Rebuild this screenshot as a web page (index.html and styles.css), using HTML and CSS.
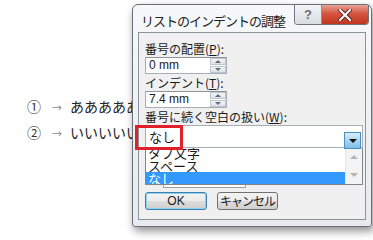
FILE: index.html
```html
<!DOCTYPE html>
<html lang="ja">
  <head>
    <meta charset="UTF-8" />
    <title>リストのインデントの調整</title>
    <link rel="stylesheet" href="styles.css">
  </head>
  <body>
    <div class="doc">
      <p class="doc-line"><span class="num">①</span><span class="arrow">→</span>あああああ</p>
      <p class="doc-line"><span class="num">②</span><span class="arrow">→</span>いいいいい</p>
    </div>

    <div class="dialog">
      <div class="title-bar">
        <span class="title">リストのインデントの調整</span>
        <div class="caption-buttons">
          <span class="cap-btn help">?</span>
          <span class="cap-btn close">
            <svg width="14" height="12" viewBox="0 0 14 12">
              <path d="M2 1 L12 11 M12 1 L2 11" stroke="#5a2a24" stroke-width="4" stroke-linecap="square" />
              <path d="M2 1 L12 11 M12 1 L2 11" stroke="#fff" stroke-width="2" stroke-linecap="square" />
            </svg>
          </span>
        </div>
      </div>

      <div class="client">
        <label class="field-label">番号の配置(<u>P</u>):</label>
        <div class="spin">
          <span class="spin-value">0 mm</span>
          <span class="spin-buttons"><span class="spin-up"></span><span class="spin-down"></span></span>
        </div>

        <label class="field-label">インデント(<u>T</u>):</label>
        <div class="spin">
          <span class="spin-value">7.4 mm</span>
          <span class="spin-buttons"><span class="spin-up"></span><span class="spin-down"></span></span>
        </div>

        <label class="field-label">番号に続く空白の扱い(<u>W</u>):</label>
        <div class="combo">
          <span class="combo-value">なし</span>
          <span class="combo-button"></span>
          <span class="highlight"></span>
        </div>
        <div class="listbox">
          <ul class="list-items">
            <li>タブ文字</li>
            <li>スペース</li>
            <li class="selected">なし</li>
          </ul>
          <div class="scrollbar">
            <span class="scroll-up"></span>
            <span class="scroll-down"></span>
          </div>
        </div>
        <div class="ghost-box"></div>

        <div class="actions">
          <button class="btn default">OK</button>
          <button class="btn">キャンセル</button>
        </div>
      </div>
    </div>
  </body>
</html>
```

FILE: styles.css
```css
* {
  margin: 0;
  padding: 0;
  box-sizing: border-box;
}

body {
  width: 373px;
  height: 240px;
  background: #fff;
  font-family: "Noto Sans CJK JP", "Liberation Sans", sans-serif;
  color: #1a1a1a;
  position: relative;
  overflow: hidden;
}

/* Document text behind the dialog */
.doc {
  padding: 94px 0 0 27px;
}

.doc-line {
  font-size: 14px;
  line-height: 24px;
  color: #222;
  white-space: nowrap;
}

.doc-line .num {
  display: inline-block;
  width: 25px;
  color: #333;
}

.doc-line .arrow {
  display: inline-block;
  width: 18px;
  font-size: 10px;
  color: #8a8a8a;
}

/* Dialog window */
.dialog {
  position: absolute;
  left: 132px;
  top: 4px;
  width: 240px;
  height: 223px;
  display: flex;
  flex-direction: column;
  border: 1px solid #6b7078;
  border-radius: 6px 6px 3px 3px;
  background: linear-gradient(#f6f8fa, #e7eaee);
  box-shadow: 2px 4px 8px rgba(0, 0, 0, 0.45);
}

.title-bar {
  height: 27px;
  display: flex;
  align-items: flex-start;
  padding-left: 8px;
}

.title {
  font-size: 13px;
  letter-spacing: -1px;
  line-height: 16px;
  margin-top: 8px;
  color: #222;
}

.caption-buttons {
  margin-left: auto;
  margin-right: 2px;
  display: flex;
  border: 1px solid #6f747c;
  border-top: none;
  border-radius: 0 0 4px 4px;
  overflow: hidden;
}

.cap-btn {
  height: 19px;
  display: flex;
  align-items: center;
  justify-content: center;
}

.cap-btn.help {
  width: 27px;
  background: linear-gradient(#f2f4f6, #d9dde2);
  border-right: 1px solid #8c9096;
  font-family: "Liberation Sans", sans-serif;
  font-weight: bold;
  font-size: 13px;
  color: #6a6e74;
}

.cap-btn.close {
  width: 46px;
  background: linear-gradient(#e8a295 0%, #d5543f 45%, #c1361f 100%);
}

.client {
  flex: 1;
  margin: 0 5px 6px;
  border: 1px solid #8d939b;
  background: #f0f0f0;
  display: flex;
  flex-direction: column;
  padding: 8px 0 0 6px;
  position: relative;
}

.client > * {
  flex-shrink: 0;
}

.field-label {
  font-size: 12px;
  line-height: 15px;
  color: #1a1a1a;
  white-space: nowrap;
}

.spin {
  width: 82px;
  height: 17px;
  margin: 1px 0 1px;
  background: #fff;
  border: 1px solid #a9adb5;
  border-top-color: #8e939a;
  display: flex;
  align-items: center;
}

.spin-value {
  flex: 1;
  font-family: "Liberation Sans", sans-serif;
  font-size: 12px;
  padding-left: 3px;
  line-height: 15px;
}

.spin-buttons {
  width: 16px;
  height: 15px;
  display: flex;
  flex-direction: column;
  gap: 1px;
}

.spin-up,
.spin-down {
  flex: 1;
  background: linear-gradient(#f4f5f7, #dde1e6);
  border: 1px solid #bfc5cd;
  position: relative;
}

.spin-up::after,
.spin-down::after {
  content: "";
  position: absolute;
  left: 4px;
  top: 1px;
  border-left: 3px solid transparent;
  border-right: 3px solid transparent;
}

.spin-up::after {
  border-bottom: 3px solid #5f6c7a;
}

.spin-down::after {
  border-top: 3px solid #5f6c7a;
}

.combo {
  width: 218px;
  height: 23px;
  margin-top: 1px;
  background: #fff;
  border: 1px solid #a9adb5;
  display: flex;
  align-items: center;
  position: relative;
  z-index: 2;
}

.combo-value {
  flex: 1;
  font-size: 13px;
  line-height: 16px;
  padding-left: 3px;
}

.combo-button {
  width: 17px;
  height: 17px;
  margin-right: 1px;
  align-self: flex-start;
  margin-top: 6px;
  background: linear-gradient(#d9eefb, #7ebde8);
  border: 1px solid #4a8fc0;
  position: relative;
}

.combo-button::after {
  content: "";
  position: absolute;
  left: 4px;
  top: 6px;
  border-left: 4px solid transparent;
  border-right: 4px solid transparent;
  border-top: 4px solid #111;
}

.highlight {
  position: absolute;
  left: -11px;
  top: -1px;
  width: 48px;
  height: 25px;
  border: 3px solid #e0202a;
}

.listbox {
  width: 218px;
  height: 38px;
  margin-top: -1px;
  background: #fff;
  border: 1px solid #7f848b;
  border-top: none;
  display: flex;
  overflow: hidden;
  position: relative;
  z-index: 1;
}

.list-items {
  flex: 1;
  list-style: none;
  margin-top: -1px;
}

.list-items li {
  font-size: 13px;
  line-height: 13px;
  height: 13px;
  padding-left: 2px;
}

.list-items li.selected {
  background: #3399ff;
  color: #fff;
}

.scrollbar {
  width: 17px;
  background: #f3f3f3;
  border-left: 1px solid #e6e6e6;
  position: relative;
}

.scroll-up,
.scroll-down {
  position: absolute;
  left: 4px;
  border-left: 4px solid transparent;
  border-right: 4px solid transparent;
}

.scroll-up {
  top: 8px;
  border-bottom: 4px solid #b5b5b5;
}

.scroll-down {
  bottom: 7px;
  border-top: 4px solid #b5b5b5;
}

.ghost-box {
  width: 83px;
  height: 3px;
  margin-left: 18px;
  border: 1px solid #a0a0a0;
  border-top: none;
  background: #fff;
}

.actions {
  display: flex;
  gap: 10px;
  margin-top: 4px;
}

.btn {
  height: 18px;
  font-family: "Noto Sans CJK JP", "Liberation Sans", sans-serif;
  font-size: 12px;
  line-height: 14px;
  color: #1a1a1a;
  border: 1px solid #707070;
  border-radius: 3px;
  background: linear-gradient(#f2f2f2 0%, #ebebeb 50%, #dddddd 51%, #cfcfcf 100%);
}

.btn.default {
  width: 62px;
  border-color: #3c7fb1;
  box-shadow: inset 0 0 0 1px #8fd2f0;
  font-family: "Liberation Sans", sans-serif;
}

.btn:not(.default) {
  width: 61px;
  letter-spacing: -1px;
}
```
